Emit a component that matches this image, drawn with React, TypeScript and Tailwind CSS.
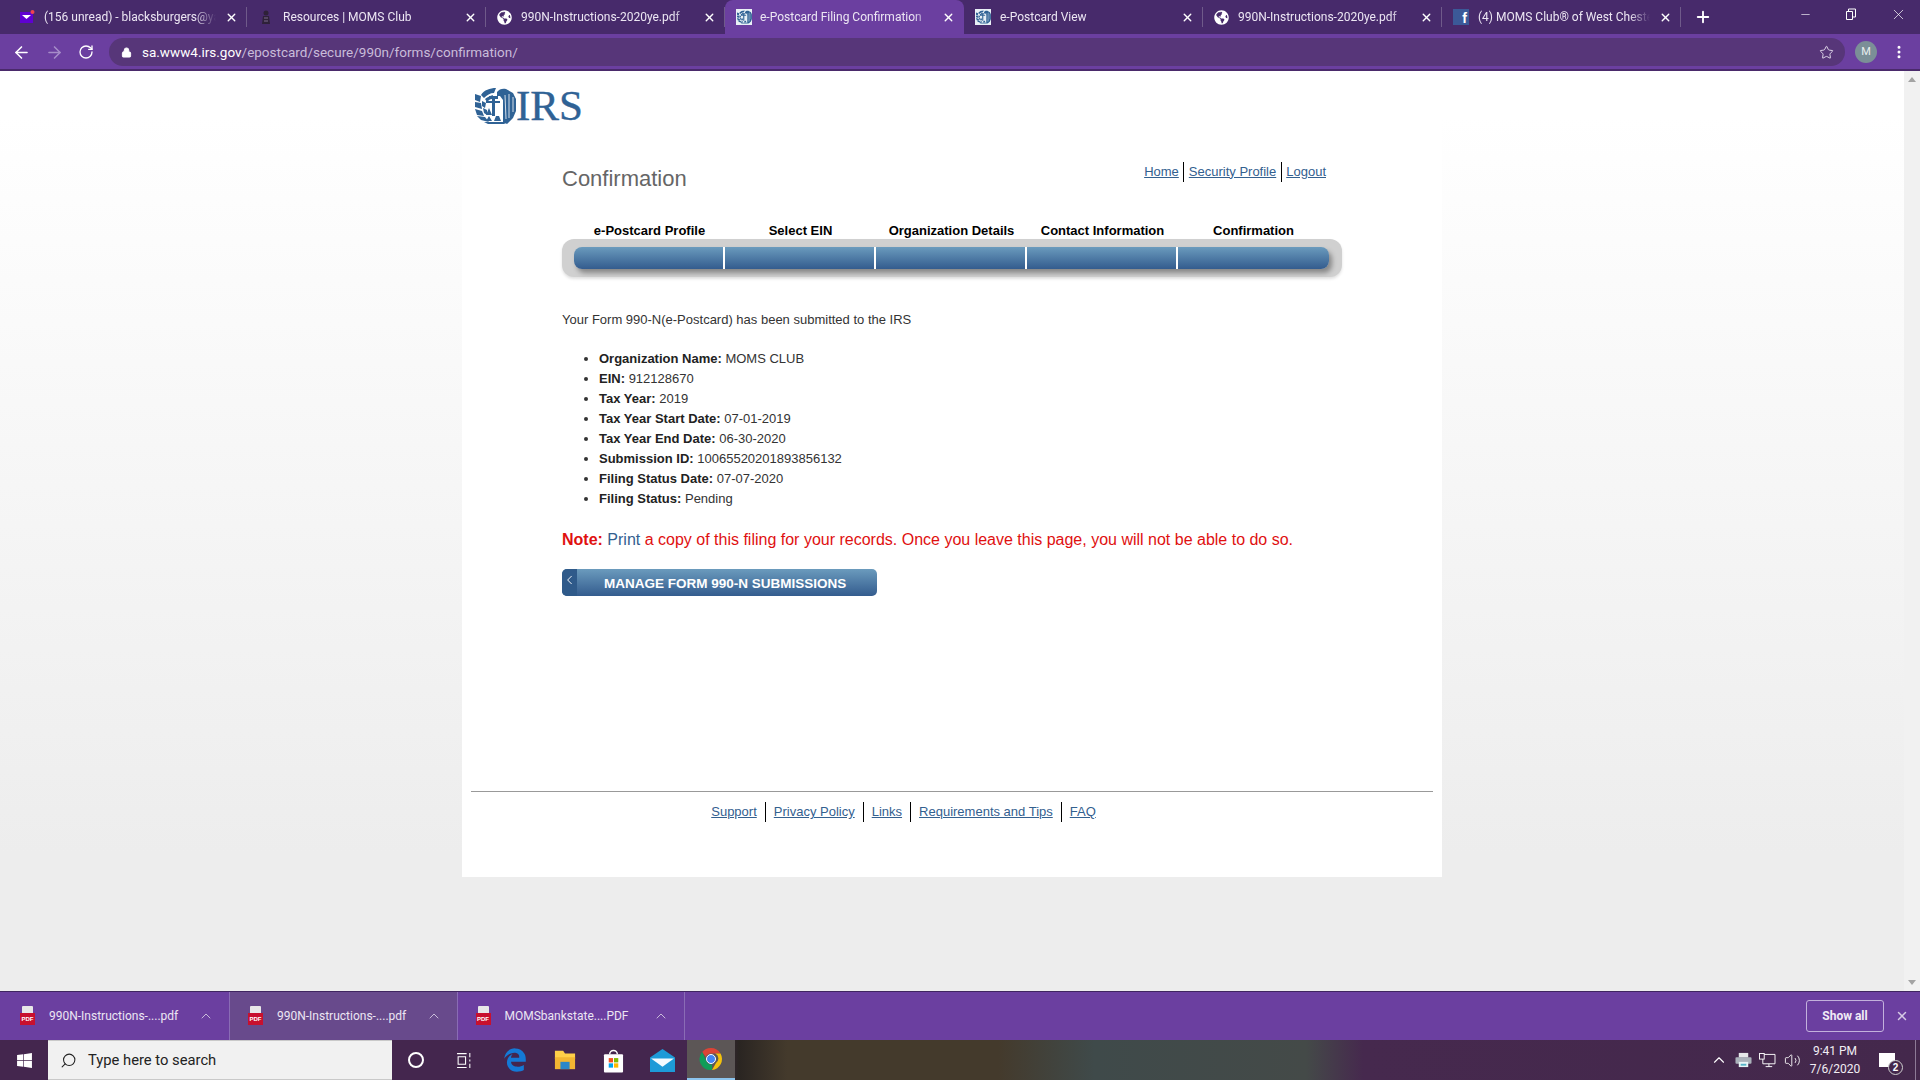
import { Star, X, Plus, Minus, ArrowLeft, ArrowRight, RotateCw, Lock, ChevronUp, MoreVertical, Search, Volume2, ChevronLeft } from "lucide-react";
import { FaWindows, FaGlobeAmericas, FaEdgeLegacy } from "react-icons/fa";

const sans = "font-['Roboto',sans-serif]";

const tabs = [
  { title: "(156 unread) - blacksburgers@yahoo", icon: "mail" },
  { title: "Resources | MOMS Club", icon: "moms" },
  { title: "990N-Instructions-2020ye.pdf", icon: "globe" },
  { title: "e-Postcard Filing Confirmation", icon: "irs", active: true },
  { title: "e-Postcard View", icon: "irs" },
  { title: "990N-Instructions-2020ye.pdf", icon: "globe" },
  { title: "(4) MOMS Club® of West Chester", icon: "fb" },
];

const details = [
  ["Organization Name:", "MOMS CLUB"],
  ["EIN:", "912128670"],
  ["Tax Year:", "2019"],
  ["Tax Year Start Date:", "07-01-2019"],
  ["Tax Year End Date:", "06-30-2020"],
  ["Submission ID:", "10065520201893856132"],
  ["Filing Status Date:", "07-07-2020"],
  ["Filing Status:", "Pending"],
];

const steps = ["e-Postcard Profile", "Select EIN", "Organization Details", "Contact Information", "Confirmation"];
const footerLinks = ["Support", "Privacy Policy", "Links", "Requirements and Tips", "FAQ"];
const topLinks = ["Home", "Security Profile", "Logout"];

const Seal = ({ className }: { className: string }) => (
  <svg viewBox="0 0 41 36" className={className} fill="#2f6295">
    {/* wreath */}
    <path d="M6 7C9 2 15 0 21 0l-2 5c-4 0-7 2-10 5z" />
    <path d="M10 11c2-2 5-3 8-4l-1 4c-2 0-3 1-5 3z" />
    <path d="M0 6l6 2-1 6-5-2zM0 14l6 1 1 6-7-2zM0 21l7 2 2 5-7-1zM2 28l8 1 4 5-8-2zM9 34h24l-4 2H13z" />
    <path d="M7 13l4 2-1 5-3-2zM8 20l4 2 0 5-3-2z" />
    {/* eagle */}
    <path d="M22 4c2-3 6-4 9-3l7 4 3 6v12l-3 7-6 6-4-2V12l-3-4-3 0z" />
    <path d="M30 7l1 24M34 6l0 24M38 9l0 15" stroke="#fff" strokeWidth="0.8" fill="none" />
    {/* scales */}
    <path d="M14 8h9v3h-3v17h-3V11h-3z" />
    <path d="M11 13h14v2H11z" />
    <path d="M11 27l3-7 3 7zM19 33l2-5h3l2 5zM11 33l3-5 3 5z" />
  </svg>
);

const TabIcon = ({ kind }: { kind: string }) => {
  if (kind === "globe") return <FaGlobeAmericas className="size-[15px] text-white" />;
  if (kind === "fb")
    return (
      <div className="size-4 bg-[#3b5998] flex items-end justify-end pr-[2px] text-white text-[14px] leading-none font-bold font-['Liberation_Sans',sans-serif]">
        f
      </div>
    );
  if (kind === "mail")
    return (
      <svg viewBox="0 0 16 16" className="size-4">
        <rect x="1" y="3" width="13" height="11" fill="#5f01d1" />
        <path d="M3 6h9l-4.500 4z" fill="#fff" />
        <circle cx="13.500" cy="3" r="2" fill="#f0434f" />
      </svg>
    );
  if (kind === "moms")
    return (
      <svg viewBox="0 0 16 16" className="size-4">
        <circle cx="8" cy="4" r="2.500" fill="#2e2138" />
        <path d="M4 15l1-8h6l1 8z" fill="#2e2138" />
        <path d="M6 9h4M6 12h4" stroke="#7d6a8e" />
      </svg>
    );
  return (
    <div className="size-4 bg-[#e9f0f6] flex items-center justify-center">
      <Seal className="w-[15px] h-[14px]" />
    </div>
  );
};

const Tab = ({ title, icon, active }: { title: string; icon: string; active?: boolean }) => (
  <div
    className={`w-[239px] h-[34px] flex items-center pl-[11px] pr-[9px] relative ${
      active ? "bg-[#6b3fa0] rounded-t-[8px] gap-[8px]" : "gap-[9px]"
    }`}
  >
    <TabIcon kind={icon} />
    <span className={`flex-1 whitespace-nowrap overflow-hidden text-[12px] text-[#ece6f3] ${sans} [mask-image:linear-gradient(to_right,black_88%,transparent)]`}>
      {title}
    </span>
    <X className="size-[13px] text-white" strokeWidth={2.5} />
    {!active && <div className="w-px h-[20px] bg-[#6f5a8a] absolute right-0 top-[7px]" />}
  </div>
);

const PdfIcon = () => (
  <div className="w-[15px] h-[20px] flex flex-col items-center">
    <div className="w-[11px] h-[7px] bg-[#e8e8e8] rounded-t-[1px]" />
    <div className="w-[15px] h-[12px] bg-[#c8102e] text-white text-[6px] font-bold leading-[12px] text-center font-['Liberation_Sans',sans-serif]">
      PDF
    </div>
  </div>
);

const DownloadItem = ({ name, hover, first }: { name: string; hover?: boolean; first?: boolean }) => (
  <div
    className={`h-full flex items-center border-r border-[#8a6cb5] ${first ? "w-[230px] pl-[20px]" : "w-[227.5px] pl-[18px]"} ${
      hover ? "bg-[#684a8c]" : ""
    }`}
  >
    <PdfIcon />
    <span className={`ml-[14px] text-[12px] text-[#ece6f3] whitespace-nowrap ${sans}`}>{name}</span>
    <ChevronUp className="size-[16px] ml-auto mr-[15px] text-[#c9bcd9]" strokeWidth={1.5} />
  </div>
);

const IrsLogo = () => (
  <div className="flex items-center">
    <Seal className="w-[41px] h-[36px]" />
    <span className="font-['Liberation_Serif',serif] text-[43px] leading-[36px] text-[#2f6295] [-webkit-text-stroke:0.4px_#2f6295]">
      IRS
    </span>
  </div>
);

const ChromeIcon = () => (
  <svg viewBox="0 0 24 24" className="size-[24px]">
    <path d="M12 1a11 11 0 0 1 9.500 5.500H12a5.500 5.500 0 0 0-5.200 3.600L3.200 5A11 11 0 0 1 12 1z" fill="#db4437" />
    <path d="M21.500 6.500A11 11 0 0 1 13 23l4-7a5.500 5.500 0 0 0-.8-9.500z" fill="#f4c20d" />
    <path d="M13 23A11 11 0 0 1 3.200 5l4.300 9.500a5.500 5.500 0 0 0 5.500 3z" fill="#0f9d58" />
    <circle cx="12" cy="12" r="4.500" fill="#4285f4" stroke="#fff" strokeWidth="1" />
  </svg>
);

const Taskbar = () => (
  <div className="h-[40px] flex items-stretch bg-[linear-gradient(to_right,#44264e_0%,#44264e_37%,#2a2522_38.500%,#443a2c_41%,#443a2c_52%,#3f4a4a_57%,#444a48_68%,#46294e_71%,#44284c_100%)]">
    <div className="w-[48px] flex items-center justify-center">
      <FaWindows className="size-[17px] text-white" />
    </div>
    <div className="w-[344px] bg-[#f1f1f1] border-y border-[#c9c9c9] flex items-center pl-[12px] gap-[11px]">
      <Search className="size-[17px] text-[#222] -scale-x-100" strokeWidth={1.5} />
      <span className={`text-[14.750px] text-[#222] ${sans}`}>Type here to search</span>
    </div>
    <div className="w-[48px] flex items-center justify-center">
      <div className="size-[16px] rounded-full border-2 border-white" />
    </div>
    <div className="w-[48px] flex items-center justify-center">
      <svg viewBox="0 0 16 16" className="size-[17px]" fill="none" stroke="#fff">
        <path d="M1 1.500h9M1 14.500h9M2 4.500h7v7H2zM13 1v4M13 7v2M13 11v4" />
      </svg>
    </div>
    <div className="w-[52px] pl-[2px] flex items-center justify-center">
      <FaEdgeLegacy className="size-[24px] text-[#1479d6]" />
    </div>
    <div className="w-[49px] flex items-center justify-center">
      <svg viewBox="0 0 24 22" className="w-[22px] h-[22px]">
        <path d="M1 1h9l2 3h11v6H1z" fill="#ffcf48" />
        <path d="M1 8h22v13H1z" fill="#f2b632" />
        <rect x="7" y="13" width="10" height="8" fill="#2b87c9" />
      </svg>
    </div>
    <div className="w-[49px] flex items-center justify-center">
      <svg viewBox="0 0 22 26" className="w-[21px] h-[26px]">
        <path d="M7 7a4 4 0 0 1 8 0" fill="none" stroke="#fff" strokeWidth="1.500" />
        <rect x="1" y="7" width="20" height="19" fill="#fff" rx="1" />
        <rect x="6" y="11" width="4.500" height="4.500" fill="#f25022" />
        <rect x="11.500" y="11" width="4.500" height="4.500" fill="#7fba00" />
        <rect x="6" y="16.500" width="4.500" height="4.500" fill="#00a4ef" />
        <rect x="11.500" y="16.500" width="4.500" height="4.500" fill="#ffb900" />
      </svg>
    </div>
    <div className="w-[49px] flex items-center justify-center">
      <svg viewBox="0 0 24 24" className="size-[25px]">
        <path d="M12 1l12 8v14H0V9z" fill="#1d9bd8" />
        <path d="M1 10h22l-11 8z" fill="#f3fbff" />
      </svg>
    </div>
    <div className="w-[48px] bg-[#5c5656] border-b-2 border-[#8cc4ee] flex items-center justify-center">
      <ChromeIcon />
    </div>
    <div className="flex-1" />
    <div className="flex items-center text-white">
      <ChevronUp className="size-[18px]" strokeWidth={1.5} />
      <svg viewBox="0 0 18 16" className="w-[17px] h-[16px] ml-[6.500px]">
        <rect x="4" y="0.500" width="10" height="5" fill="#e6e8ea" />
        <rect x="0.500" y="5" width="17" height="7" rx="1" fill="#aab2ba" />
        <rect x="4" y="10" width="10" height="5.500" fill="#e8f4f6" />
        <rect x="6" y="12" width="6" height="2" fill="#55b4c8" />
      </svg>
      <svg viewBox="0 0 18 16" className="w-[17px] h-[15px] ml-[7.500px]" fill="none" stroke="#fff">
        <path d="M4 1.500h13v10H4zM7 14.500h7M10.500 11.500v3" />
        <rect x="0.500" y="0.500" width="5" height="6" fill="#44284c" />
      </svg>
      <Volume2 className="size-[17px] ml-[8px]" strokeWidth={1.25} />
      <div className={`w-[62px] ml-[3px] text-center text-[12px] leading-[18px] text-[#f1edf3] ${sans}`}>
        <div>9:41 PM</div>
        <div>7/6/2020</div>
      </div>
      <div className="w-[42px] flex justify-center">
        <div className="relative w-[16px] h-[14px] bg-white">
          <div className="absolute -right-[8px] -bottom-[8px] size-[15px] rounded-full bg-[#44284c] border border-[#cfcfcf] text-[10px] leading-[13px] text-center font-bold">
            2
          </div>
        </div>
      </div>
      <div className="w-px h-full ml-[7px] mr-[4px] bg-[#8d7a96]" />
    </div>
  </div>
);

const LinkRow = ({ links, gap }: { links: string[]; gap: string }) => (
  <div className="flex items-center">
    {links.map((link, i) => (
      <a
        key={link}
        href="#"
        className={`underline text-[#33608f] text-[13px] leading-[20px] ${
          i < links.length - 1 ? `border-r border-black ${gap}` : ""
        }`}
      >
        {link}
      </a>
    ))}
  </div>
);

export default function App() {
  return (
    <div className="w-[1920px] h-screen flex flex-col overflow-hidden font-['Liberation_Sans',Arial,sans-serif]">
      {/* tab strip */}
      <div className="h-[34px] bg-[#472a6b] flex items-center pl-[8px]">
        {tabs.map((tab, i) => (
          <Tab key={i} title={tab.title} icon={tab.icon} active={tab.active} />
        ))}
        <Plus className="size-[18px] text-white ml-[13px]" strokeWidth={2.5} />
        <div className="flex-1" />
        <div className="flex items-center text-white gap-[33px] pr-[13px] -mt-[6px]">
          <Minus className="size-[13px] text-[#d8d0e2]" strokeWidth={1.5} />
          <svg viewBox="0 0 12 12" className="size-[12px]" fill="none" stroke="#fff">
            <path d="M1.500 3.500h6v8h-6zM3.500 3.500v-2.500h7v8h-3" />
          </svg>
          <X className="size-[17px]" strokeWidth={1} />
        </div>
      </div>
      {/* toolbar */}
      <div className="h-[37px] bg-[#6b3fa0] border-b-2 border-[#4a2a6b] flex items-start pt-[4px]">
        <div className="w-[109px] h-[28px] flex items-center pl-[12px] gap-[14px]">
          <ArrowLeft className="size-[19px] text-white" strokeWidth={2} />
          <ArrowRight className="size-[19px] text-[#a68cc8]" strokeWidth={2} />
          <RotateCw className="size-[16px] text-white" strokeWidth={2} />
        </div>
        <div className="w-[1736px] h-[28px] rounded-full bg-[#573679] flex items-center pl-[12px] pr-[11px]">
          <Lock className="size-[11px] text-white" fill="#fff" />
          <span className={`ml-[10px] text-[13.5px] text-[#c9bcd9] ${sans}`}>
            <span className="text-white">sa.www4.irs.gov</span>/epostcard/secure/990n/forms/confirmation/
          </span>
          <div className="flex-1" />
          <Star className="size-[15px] text-[#e5deee]" strokeWidth={1.5} />
        </div>
        <div className="flex-1 h-[28px] flex items-center pl-[10px] gap-[14px]">
          <div className={`size-[22px] rounded-full bg-[#7b8f97] text-[#e8eeee] text-[11px] flex items-center justify-center ${sans}`}>
            M
          </div>
          <MoreVertical className="size-[16px] text-white" strokeWidth={2.5} />
        </div>
      </div>
      {/* page */}
      <div className="flex-1 min-h-0 flex bg-[linear-gradient(to_bottom,#ffffff_0%,#ffffff_5%,#ededed_85%,#ededed_100%)]">
        <div className="flex-1 flex justify-center items-start">
          <div className="w-[980px] h-[806px] bg-white flex flex-col text-[13px] text-[#333]">
            <div className="pl-[13px] pt-[17px]">
              <IrsLogo />
            </div>
            <div className="w-[780px] ml-[100px] mt-[25px] flex justify-between pr-[16px]">
              <h1 className="text-[22px] leading-[30px] text-[#666] mt-[15px]">Confirmation</h1>
              <LinkRow links={topLinks} gap="pr-[4.500px] mr-[4.500px]" />
            </div>
            <div className="w-[780px] ml-[100px] mt-[28px]">
              <div className="flex pl-[12px] pr-[13px]">
                {steps.map((step) => (
                  <div key={step} className="flex-1 text-center font-bold text-[13px] leading-[18px] text-black">
                    {step}
                  </div>
                ))}
              </div>
              <div className="-mt-px h-[38px] rounded-[12px] bg-[#d0d0d0] shadow-[0_2px_3px_rgba(0,0,0,0.12)] pl-[12px] pr-[13px] pt-[8px]">
                <div className="flex h-[22px] rounded-[8px] overflow-hidden shadow-[3px_4px_5px_rgba(0,0,0,0.35)]">
                  {steps.map((step, i) => (
                    <div
                      key={step}
                      className={`bg-linear-to-b from-[#6b9bbd] to-[#345c8e] ${
                        i < 4 ? "w-[151px] border-r-2 border-white" : "flex-1"
                      }`}
                    />
                  ))}
                </div>
              </div>
              <p className="mt-[35px] leading-[16px]">Your Form 990-N(e-Postcard) has been submitted to the IRS</p>
              <ul className="mt-[21px] list-disc pl-[37px]">
                {details.map(([label, value]) => (
                  <li key={label} className="leading-[20px]">
                    <strong className="font-bold text-[#222]">{label}</strong> {value}
                  </li>
                ))}
              </ul>
              <p className="mt-[21px] text-[16px] leading-[20px] text-[#e01010]">
                <strong className="font-bold">Note:</strong> <span className="text-[#33608f]">Print</span> a copy of this
                filing for your records. Once you leave this page, you will not be able to do so.
              </p>
              <button className="mt-[19px] w-[315px] h-[27px] rounded-[5px] overflow-hidden flex items-stretch text-left bg-linear-to-b from-[#6b9bbd] to-[#345c8e] text-white font-bold text-[13.5px]">
                <span className="w-[15px] bg-[#2f5a8a] flex justify-center pt-[3px]">
                  <ChevronLeft className="size-[16px]" strokeWidth={1.5} />
                </span>
                <span className="pl-[27px] leading-[29px]">MANAGE FORM 990-N SUBMISSIONS</span>
              </button>
            </div>
            <div className="mx-[9px] mt-[195px] border-t border-[#999]" />
            <div className="mt-[10px] flex justify-center pr-[97px]">
              <LinkRow links={footerLinks} gap="pr-[8px] mr-[8px]" />
            </div>
          </div>
        </div>
        <div className="w-[16px] bg-[#f1f1f1] flex flex-col items-center justify-between py-[6px]">
          <div className="w-0 h-0 border-x-[4px] border-x-transparent border-b-[5px] border-b-[#a3a3a3]" />
          <div className="w-0 h-0 border-x-[4px] border-x-transparent border-t-[5px] border-t-[#a3a3a3]" />
        </div>
      </div>
      {/* downloads bar */}
      <div className="h-[49px] bg-[#6b3fa0] border-t border-[#3f2560] flex items-stretch">
        <DownloadItem name="990N-Instructions-....pdf" first />
        <DownloadItem name="990N-Instructions-....pdf" hover />
        <DownloadItem name="MOMSbankstate....PDF" />
        <div className="flex-1" />
        <div className="flex items-center pr-[11px] gap-[11px]">
          <div className={`w-[78px] h-[32px] rounded-[3px] border border-[#c3b1dc] flex items-center justify-center text-[12px] font-bold text-[#f0ebf6] ${sans}`}>
            Show all
          </div>
          <X className="size-[14px] text-[#d6cbe4]" strokeWidth={2.5} />
        </div>
      </div>
      <Taskbar />
    </div>
  );
}
